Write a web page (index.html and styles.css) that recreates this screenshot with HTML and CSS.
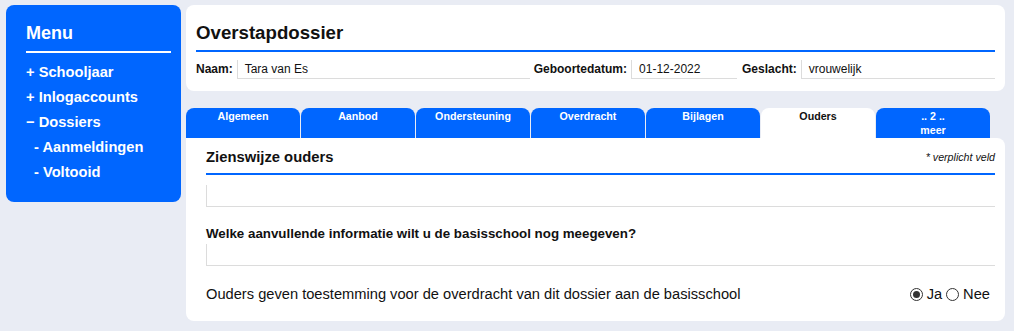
FILE: index.html
```html
<!DOCTYPE html>
<html lang="nl">
<head>
    <meta charset="UTF-8">
    <meta name="viewport" content="width=device-width, initial-scale=1.0">
    <title>Overstapdossier</title>
    <link rel="stylesheet" href="styles.css">
</head>
<body>
    <div class="layout">
        <nav class="sidebar">
            <h2 class="sidebar-title">Menu</h2>
            <ul class="menu">
                <li class="menu-item">+ Schooljaar</li>
                <li class="menu-item">+ Inlogaccounts</li>
                <li class="menu-item">&minus; Dossiers</li>
                <li class="menu-item menu-sub">- Aanmeldingen</li>
                <li class="menu-item menu-sub">- Voltooid</li>
            </ul>
        </nav>

        <main class="main">
            <section class="card header-card">
                <h1 class="page-title">Overstapdossier</h1>
                <div class="info-row">
                    <span class="info-label">Naam:</span>
                    <span class="info-value info-name">Tara van Es</span>
                    <span class="info-label">Geboortedatum:</span>
                    <span class="info-value info-date">01-12-2022</span>
                    <span class="info-label">Geslacht:</span>
                    <span class="info-value info-gender">vrouwelijk</span>
                </div>
            </section>

            <div class="tabs">
                <div class="tab">Algemeen</div>
                <div class="tab">Aanbod</div>
                <div class="tab">Ondersteuning</div>
                <div class="tab">Overdracht</div>
                <div class="tab">Bijlagen</div>
                <div class="tab tab-active">Ouders</div>
                <div class="tab">.. 2 ..<br>meer</div>
            </div>

            <section class="card content-card">
                <div class="section-head">
                    <h2 class="section-title">Zienswijze ouders</h2>
                    <span class="required-note">* verplicht veld</span>
                </div>
                <div class="text-field"></div>

                <label class="field-label">Welke aanvullende informatie wilt u de basisschool nog meegeven?</label>
                <div class="text-field text-field-tight"></div>

                <div class="consent-row">
                    <span class="consent-text">Ouders geven toestemming voor de overdracht van dit dossier aan de basisschool</span>
                    <div class="radio-group">
                        <label class="radio-option"><input type="radio" name="toestemming" class="radio" checked> Ja</label>
                        <label class="radio-option"><input type="radio" name="toestemming" class="radio"> Nee</label>
                    </div>
                </div>
            </section>
        </main>
    </div>
</body>
</html>
```

FILE: styles.css
```css
:root {
    --blue: #0066ff;
    --page: #e9ecf4;
    --white: #ffffff;
    --text: #111111;
    --field-border: #dcdcdc;
    --radius: 8px;
}

* {
    margin: 0;
    padding: 0;
    box-sizing: border-box;
}

body {
    font-family: 'Liberation Sans', Arial, sans-serif;
    color: var(--text);
    background-color: var(--page);
}

.layout {
    display: flex;
    align-items: flex-start;
    gap: 5px;
    padding: 5px 9px 0 6px;
}

/* sidebar */

.sidebar {
    width: 175px;
    flex-shrink: 0;
    background-color: var(--blue);
    border-radius: var(--radius);
    padding: 17px 10px 17px 20px;
    color: var(--white);
}

.sidebar-title {
    font-size: 18px;
    line-height: 22px;
    font-weight: 700;
    padding-bottom: 7px;
    border-bottom: 2px solid var(--white);
    margin-bottom: 7px;
}

.menu {
    list-style: none;
}

.menu-item {
    font-size: 14.67px;
    font-weight: 700;
    line-height: 25px;
}

.menu-sub {
    padding-left: 8px;
}

/* main */

.main {
    flex: 1;
    display: flex;
    flex-direction: column;
}

.card {
    background-color: var(--white);
    border-radius: var(--radius);
}

.header-card {
    height: 86px;
    padding: 17px 10px 0 10px;
}

.page-title {
    font-size: 18.67px;
    line-height: 22px;
    font-weight: 700;
    padding-bottom: 6px;
    border-bottom: 2px solid var(--blue);
}

.info-row {
    display: flex;
    align-items: flex-end;
    gap: 4px;
    margin-top: 8px;
}

.info-label {
    font-size: 12px;
    font-weight: 700;
    line-height: 16px;
    padding-bottom: 2px;
}

.info-value {
    font-size: 12px;
    line-height: 18px;
    padding-left: 7px;
    border-left: 1px solid var(--field-border);
    border-bottom: 1px solid var(--field-border);
}

.info-name {
    width: 293px;
}

.info-date {
    width: 106px;
    margin-right: 1px;
}

.info-gender {
    flex: 1;
}

/* tabs */

.tabs {
    display: flex;
    gap: 1px;
    margin-top: 17px;
}

.tab {
    width: 114px;
    height: 30px;
    background-color: var(--blue);
    color: var(--white);
    border-radius: var(--radius) var(--radius) 0 0;
    font-size: 10.67px;
    font-weight: 700;
    line-height: 14px;
    text-align: center;
    padding-top: 1px;
}

.tab-active {
    background-color: var(--white);
    color: var(--text);
}

/* content */

.content-card {
    border-top-left-radius: 0;
    padding: 0 10px 0 20px;
    height: 183px;
}

.section-head {
    display: flex;
    justify-content: space-between;
    align-items: center;
    height: 37px;
    padding-top: 2px;
    border-bottom: 2px solid var(--blue);
}

.section-title {
    font-size: 14.8px;
    font-weight: 700;
}

.required-note {
    font-size: 10.67px;
    font-style: italic;
}

.text-field {
    height: 22px;
    margin-top: 10px;
    border-left: 1px solid var(--field-border);
    border-bottom: 1px solid var(--field-border);
}

.field-label {
    display: block;
    font-size: 13.33px;
    font-weight: 700;
    line-height: 16px;
    margin-top: 19px;
}

.text-field-tight {
    margin-top: 2px;
}

.consent-row {
    display: flex;
    justify-content: space-between;
    align-items: center;
    margin-top: 20px;
    font-size: 14.67px;
}

.radio-group {
    display: flex;
    gap: 4px;
    margin-right: 5px;
}

.radio-option {
    display: flex;
    align-items: center;
    gap: 4px;
}

.radio {
    appearance: none;
    width: 13px;
    height: 13px;
    border: 1px solid #333333;
    border-radius: 50%;
    background-color: var(--white);
    position: relative;
}

.radio:checked::after {
    content: '';
    position: absolute;
    left: 2px;
    top: 2px;
    width: 7px;
    height: 7px;
    border-radius: 50%;
    background-color: #333333;
}
```
